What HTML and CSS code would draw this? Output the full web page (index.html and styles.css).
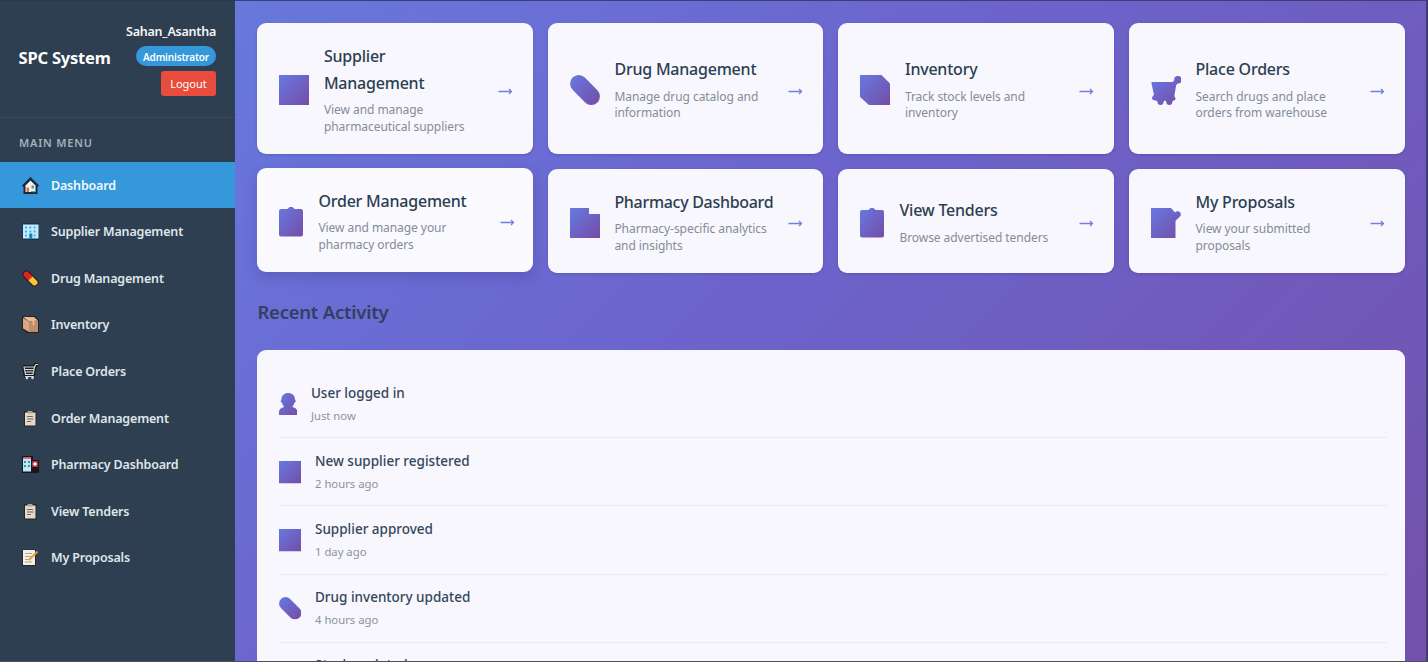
FILE: index.html
```html
<!DOCTYPE html>
<html lang="en">
<head>
<meta charset="utf-8">
<title>SPC System</title>
<link rel="stylesheet" href="styles.css">
</head>
<body>
<svg class="defs" width="0" height="0">
  <defs>
    <linearGradient id="g" x1="0" y1="0" x2="1" y2="1"><stop offset="0" stop-color="#667ae2"/><stop offset="1" stop-color="#754ca6"/></linearGradient>
    <symbol id="square" viewBox="0 0 30 30"><path fill="url(#g)" d="M0 0h30v30H0z"/></symbol>
    <symbol id="pill" viewBox="0 0 30 30"><path fill="url(#g)" d="M2.6 2.6a8.6 8.6 0 0 1 12.2 0l12.600 12.600a8.600 8.600 0 0 1-12.200 12.200L2.600 14.800a8.600 8.600 0 0 1 0-12.200z"/></symbol>
    <symbol id="box" viewBox="0 0 30 30"><path fill="url(#g)" d="M0 0h21.500l8.500 8.500V30H9L0 22z"/></symbol>
    <symbol id="cart" viewBox="0 0 30 30"><path fill="url(#g)" d="M1.500 7h19.500q1.500 0 2.200-2A3.700 3.700 0 1 1 27 8.500q-1.500 0-2 2.500L23.500 20q-.3 1.500.5 2.500a1.800 1.800 0 0 1-1.500 3q-1 0-1.200 1.500a3 3 0 0 1-6 0q-.3-1.500-1.300-1.500T12.500 27a3 3 0 0 1-6 0Q6.200 25.500 4.500 25.500C1 25.500 0 23 2 21q1-1 .7-2.500L.6 9C.2 7.600.5 7 1.500 7z"/></symbol>
    <symbol id="clip" viewBox="0 0 24 30"><path fill="url(#g)" d="M2 2h5.500q1.500 0 2-1a3 3 0 0 1 5 0q.5 1 2 1H22a2 2 0 0 1 2 2v23.500a2 2 0 0 1-2 2H2a2 2 0 0 1-2-2V4a2 2 0 0 1 2-2z"/></symbol>
    <symbol id="hospital" viewBox="0 0 30 30"><path fill="url(#g)" d="M0 0h19v6h11v24H0z"/></symbol>
    <symbol id="memo" viewBox="0 0 30 30"><path fill="url(#g)" d="M0 0h20l4 4.500c2.500-2.500 6.500-.5 5.700 2.700C29 9.500 26 10.500 24.500 13V30H0z"/></symbol>
    <symbol id="person" viewBox="0 0 18 22"><path fill="url(#g)" d="M9 0c4 0 6.800 3 6.500 6 1.200.6 1 3-.4 3.500-.5 2-1.300 3-2.300 4.200C16 14.400 18 15.700 18 19v3H0v-3c0-3.300 2-4.600 5.200-5.300-1-1.200-1.800-2.200-2.300-4.200C1.500 9 1.300 6.600 2.500 6 2.200 3 5 0 9 0z"/></symbol>
    <symbol id="arrow" viewBox="0 0 15 9"><path fill="none" stroke="#7280e3" stroke-width="1.300" d="M.5 4.500h13M11 2l2.500 2.500L11 7"/></symbol>
    <symbol id="clip-color" viewBox="0 0 17 17"><path fill="#252321" d="M2 1h12.500v15.500H2z"/><path fill="#e5d8c8" d="M3 2.500h10.500v13H3z"/><path fill="#aaa69d" d="M5.500 1h5v2.500h-5z"/><path stroke="#6b6864" d="M5 6.500h6M5 9h6.500M5 11.500h4"/></symbol>
  </defs>
</svg>
<div class="app">
  <aside class="sidebar">
    <header class="brand-row">
      <div class="brand">SPC System</div>
      <div class="user">
        <span class="user-name">Sahan_Asantha</span>
        <span class="role">Administrator</span>
        <button class="logout">Logout</button>
      </div>
    </header>
    <div class="menu-label">MAIN MENU</div>
    <nav>
      <a class="nav-item active"><svg viewBox="0 0 17 17"><path fill="#1d2730" d="M8.500 0 17 8.500 15.500 10v7h-14v-7L0 8.500z"/><path fill="#eef3f1" d="m8.500 3.500 5 5V15h-10V8.500z"/><path fill="#e0703c" d="M4.500 10.500h2.500V15H4.500z"/><path fill="#5a90b0" d="M9.500 8.500h2.500v3H9.500z"/><path stroke="#38a77a" d="M9 14.700h5"/></svg>Dashboard</a>
      <a class="nav-item"><svg viewBox="0 0 17 17"><path fill="#17364a" d="M0 0h17v17H0z"/><path fill="#c3edff" d="M1 1.500h15.500v14H1z"/><path stroke="#42aee6" stroke-width="2" stroke-dasharray="2 2.300" d="M3 4.500h12M3 8.500h12M3 12.500h12"/><path fill="#197fba" d="M7.300 10.500h3v5h-3z"/></svg>Supplier Management</a>
      <a class="nav-item"><svg viewBox="0 0 17 17"><path stroke="#1d1b1b" stroke-width="8" stroke-linecap="round" d="m4.500 4.500 8 8"/><path stroke="#df2418" stroke-width="6" stroke-linecap="round" d="m4.500 4.500 3 3"/><path stroke="#ffc13a" stroke-width="6" stroke-linecap="round" d="m9.500 9.500 3 3"/><path stroke="#df2418" stroke-width="6" d="m6 6 2.500 2.500"/></svg>Drug Management</a>
      <a class="nav-item"><svg viewBox="0 0 17 17"><path fill="#24211f" d="M0 0h13l4 4v13H5l-5-4z"/><path fill="#e6b698" d="M1 1h11l4 3.500-9 1z"/><path fill="#dba683" d="m1 2 6 3.500V16l-6-3.500z"/><path fill="#c08e6a" d="m7 5.500 9-1V16H7z"/><path stroke="#e8c19d" stroke-width="1.500" d="M4 1.500 11.500 5v4"/></svg>Inventory</a>
      <a class="nav-item"><svg viewBox="0 0 17 17"><path fill="none" stroke="#171c20" stroke-width="4" d="M1 4h11.500L11 12H3.500L2 4M12.500 4 14 1.500h2"/><path fill="none" stroke="#d7d8d7" stroke-width="1.200" d="M1.500 4h11L11 11.500H3.500L2 4M2.500 6.500H12M3 9h8.500M12.500 4 14 1.500h2M3 13.500h9"/><circle cx="5" cy="15" r="1.300" fill="#d7d8d7"/><circle cx="10.500" cy="15" r="1.300" fill="#d7d8d7"/></svg>Place Orders</a>
      <a class="nav-item"><svg><use href="#clip-color"/></svg>Order Management</a>
      <a class="nav-item"><svg viewBox="0 0 17 17"><path fill="#15191e" d="M0 0h11v4h6v13H0z"/><path fill="#bbecf5" d="M1 1.500h8v14H1z"/><path stroke="#ed4c58" stroke-width="1.500" d="M1 2h8"/><path stroke="#438dad" stroke-width="2" stroke-dasharray="2 2" d="M2 6h7M2 10h7"/><path fill="#bd2936" d="M10 5h6v6h-6z"/><path stroke="#fff" stroke-width="1.300" d="M13 6v4M11 8h4"/></svg>Pharmacy Dashboard</a>
      <a class="nav-item"><svg><use href="#clip-color"/></svg>View Tenders</a>
      <a class="nav-item"><svg viewBox="0 0 17 17"><path fill="#262626" d="M0 .5h14V17H0z"/><path fill="#f3eee1" d="M1 1h12v15H1z"/><path stroke="#a9a59c" d="M3 4.500h7M3 7.500h7M3 10.500h4M3 13h7"/><path stroke="#e5a63b" stroke-width="2.200" d="m7 11 7-7"/><path stroke="#e58888" stroke-width="2.200" d="m14 4 1.500-1.500"/></svg>My Proposals</a>
    </nav>
  </aside>

  <main class="main">
    <section class="cards">
      <article class="card"><svg class="icon"><use href="#square"/></svg><div class="info"><h3>Supplier<br>Management</h3><p>View and manage<br>pharmaceutical suppliers</p></div><svg class="arrow"><use href="#arrow"/></svg></article>
      <article class="card"><svg class="icon"><use href="#pill"/></svg><div class="info"><h3>Drug Management</h3><p>Manage drug catalog and<br>information</p></div><svg class="arrow"><use href="#arrow"/></svg></article>
      <article class="card"><svg class="icon"><use href="#box"/></svg><div class="info"><h3>Inventory</h3><p>Track stock levels and<br>inventory</p></div><svg class="arrow"><use href="#arrow"/></svg></article>
      <article class="card"><svg class="icon"><use href="#cart"/></svg><div class="info"><h3>Place Orders</h3><p>Search drugs and place<br>orders from warehouse</p></div><svg class="arrow"><use href="#arrow"/></svg></article>
      <article class="card raised"><svg class="icon narrow"><use href="#clip"/></svg><div class="info"><h3>Order Management</h3><p>View and manage your<br>pharmacy orders</p></div><svg class="arrow"><use href="#arrow"/></svg></article>
      <article class="card"><svg class="icon"><use href="#hospital"/></svg><div class="info"><h3 class="long">Pharmacy Dashboard</h3><p>Pharmacy-specific analytics<br>and insights</p></div><svg class="arrow"><use href="#arrow"/></svg></article>
      <article class="card"><svg class="icon narrow"><use href="#clip"/></svg><div class="info"><h3>View Tenders</h3><p>Browse advertised tenders</p></div><svg class="arrow"><use href="#arrow"/></svg></article>
      <article class="card"><svg class="icon"><use href="#memo"/></svg><div class="info"><h3>My Proposals</h3><p>View your submitted<br>proposals</p></div><svg class="arrow"><use href="#arrow"/></svg></article>
    </section>
    <h2>Recent Activity</h2>
    <section class="activity">
      <div class="event"><svg class="event-icon person"><use href="#person"/></svg><div><h4>User logged in</h4><time>Just now</time></div></div>
      <div class="event"><svg class="event-icon"><use href="#square"/></svg><div><h4>New supplier registered</h4><time>2 hours ago</time></div></div>
      <div class="event"><svg class="event-icon"><use href="#square"/></svg><div><h4>Supplier approved</h4><time>1 day ago</time></div></div>
      <div class="event"><svg class="event-icon"><use href="#pill"/></svg><div><h4>Drug inventory updated</h4><time>4 hours ago</time></div></div>
      <div class="event last"><svg class="event-icon"></svg><div><h4>Stock updated</h4></div></div>
    </section>
  </main>
</div>
</body>
</html>
```
FILE: styles.css
```css
* { box-sizing: border-box; }
body {
  margin: 0;
  height: 662px;
  overflow: hidden;
  font-family: "Noto Sans", "Open Sans", sans-serif;
}
.defs { position: absolute; }
h2, h3, h4, p { margin: 0; }
.app {
  display: flex;
  height: 662px;
  overflow: hidden;
  border-bottom: 1px solid #4a4f63;
}

/* Sidebar */
.sidebar {
  width: 235px;
  flex: none;
  background: #2f3f52;
  border-top: 1px solid #29384a;
  color: #dfe6ea;
}
.brand-row {
  display: flex;
  justify-content: space-between;
  height: 117px;
  padding: 20px 19px 0 18.500px;
  border-bottom: 1px solid #394a5d;
}
.brand {
  padding-top: 25px;
  color: #fff;
  font-size: 16.5px;
  font-weight: 700;
  line-height: 24px;
  letter-spacing: -.2px;
  white-space: nowrap;
}
.user { display: flex; flex-direction: column; align-items: flex-end; }
.user-name {
  color: #f5f7f8;
  font-size: 12.5px;
  font-weight: 600;
  line-height: 22px;
  letter-spacing: -.23px;
}
.role {
  height: 20px;
  margin-top: 3px;
  padding: 0 7px;
  border-radius: 10px;
  background: #3498db;
  color: #fff;
  font-size: 10px;
  font-weight: 600;
  line-height: 22px;
  letter-spacing: -.17px;
}
.logout {
  width: 55px;
  height: 24.500px;
  margin-top: 5px;
  padding: 0;
  border: 0;
  border-radius: 3px;
  background: #e74c3c;
  color: #fff;
  font: 11px/25px "Noto Sans", sans-serif;
}
.menu-label {
  height: 43.500px;
  padding-left: 19px;
  color: #a5b0bb;
  font-size: 11px;
  font-weight: 600;
  line-height: 50px;
  letter-spacing: .8px;
}
.nav-item {
  display: flex;
  align-items: center;
  gap: 12px;
  height: 46.550px;
  padding: 1px 0 0 22px;
  font-size: 12.5px;
  font-weight: 600;
  letter-spacing: -.17px;
}
.nav-item svg { width: 17px; height: 17px; fill: none; }
.nav-item.active { background: #3498db; color: #f2f8fc; }

/* Main area */
.main {
  flex: 1;
  min-width: 0;
  padding: 22px 21.500px 0 22.400px;
  border-top: 1px solid #3c3f75;
  border-right: 2px solid #443b72;
  background: linear-gradient(135deg, #6878dd 0%, #6c64cc 42%, #7351ac 100%);
}
.cards {
  display: grid;
  grid-template-columns: repeat(4, 1fr);
  grid-template-rows: 131px 104px;
  gap: 15px;
}
.card {
  display: flex;
  align-items: center;
  padding: 0 20px 0 22px;
  border-radius: 9px;
  background: #f7f7fd;
  box-shadow: 0 1px 3px rgba(40, 25, 90, .2);
}
.card.raised {
  margin: -1px 0 1px;
  padding-right: 18px;
  background: #f9f9fe;
  box-shadow: 0 5px 14px rgba(40, 30, 100, .22);
}
.icon { width: 30px; height: 30px; flex: none; margin: 3px 14.500px 0 0; }
.icon.narrow { width: 24px; margin-right: 15px; }
.info { flex: 1; padding-top: 1px; white-space: nowrap; }
.info h3 {
  margin-bottom: 5.500px;
  color: #2c3e50;
  font-size: 16px;
  font-weight: 500;
  line-height: 27px;
  letter-spacing: -.22px;
}
.info h3.long { letter-spacing: -.3px; }
.info p {
  color: #858c98;
  font-size: 12px;
  line-height: 16.500px;
  letter-spacing: -.06px;
}
.arrow { width: 15px; height: 9px; flex: none; margin-top: 5px; }
h2 {
  padding-top: 23px;
  height: 77px;
  color: #343e62;
  font-size: 18.500px;
  font-weight: 600;
  line-height: 32px;
  letter-spacing: -.23px;
}
.activity {
  height: 330px;
  padding: 20px 18px 0 21.300px;
  border-radius: 9px;
  background: #f7f7fd;
}
.event {
  display: flex;
  align-items: center;
  height: 68.200px;
  border-bottom: 1px solid #e9eaf2;
}
.event-icon { width: 22.500px; height: 22.500px; flex: none; margin: 1px 13.800px 0 0; }
.event-icon.person { width: 18.400px; }
.event h4 {
  color: #34465a;
  font-size: 13.500px;
  font-weight: 500;
  line-height: 22px;
}
.event time {
  display: block;
  margin-top: 2px;
  color: #8d939e;
  font-size: 11.300px;
  line-height: 20px;
}
.event.last { align-items: flex-start; padding-top: 11.500px; }
```
